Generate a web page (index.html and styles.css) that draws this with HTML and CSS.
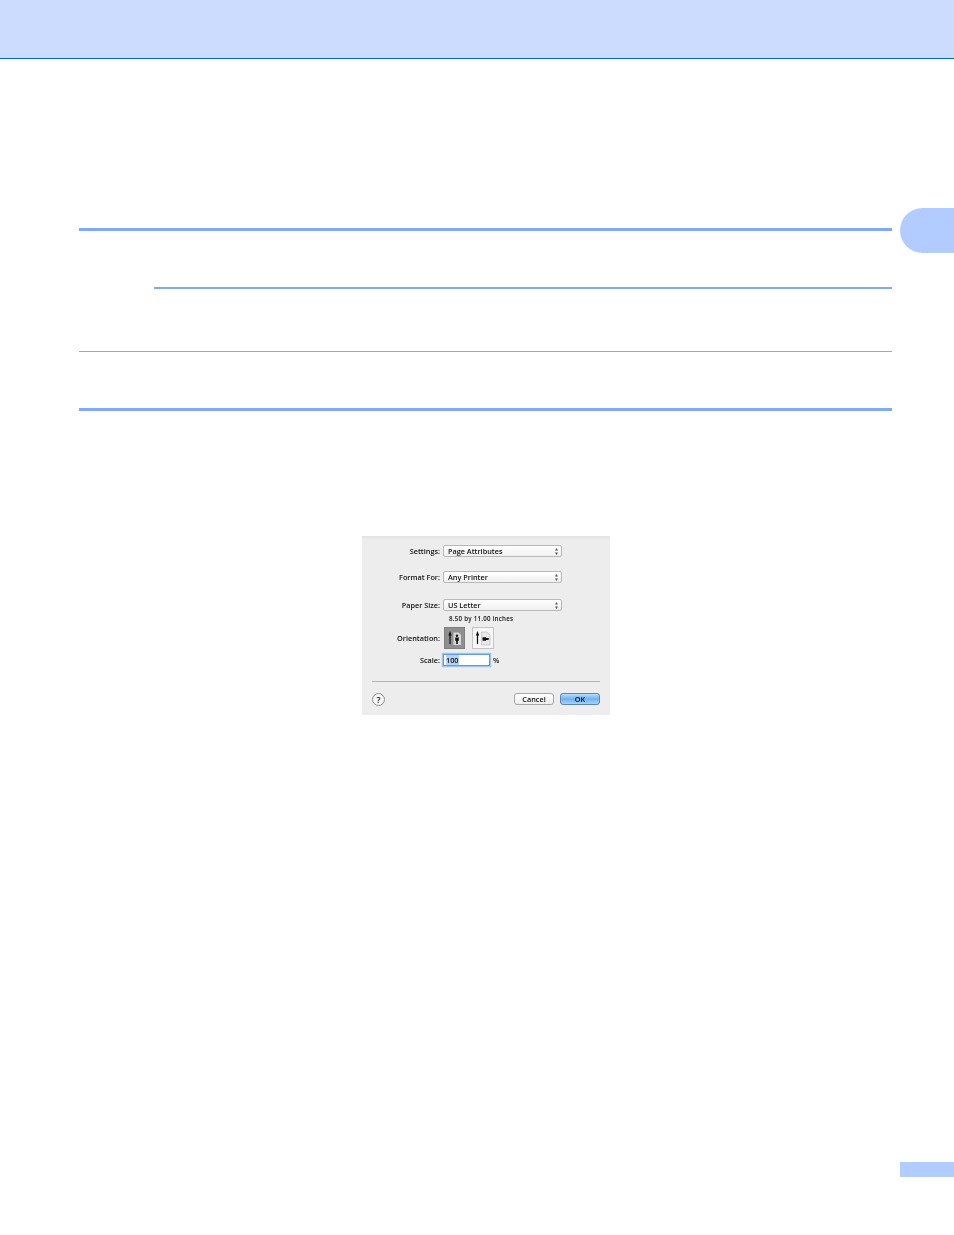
FILE: index.html
```html
<!DOCTYPE html>
<html lang="en">
<head>
    <meta charset="UTF-8">
    <title>Page Attributes</title>
    <link rel="stylesheet" href="styles.css">
</head>
<body>
    <div class="header"></div>
    <div class="chapter-tab"></div>

    <div class="content">
        <div class="rule rule-thick first"></div>
        <div class="rule rule-sub"></div>
        <div class="rule rule-thin"></div>
        <div class="rule rule-thick last"></div>

        <div class="dialog">
            <div class="row row-settings">
                <span class="label">Settings:</span>
                <div class="select"><span>Page Attributes</span><svg class="stepper" width="3" height="7" viewBox="0 0 3 7"><path d="M1.500 0 3 2.500H0zM1.500 7 0 4.500H3z" fill="#555"/></svg></div>
            </div>
            <div class="row row-format">
                <span class="label">Format For:</span>
                <div class="select"><span>Any Printer</span><svg class="stepper" width="3" height="7" viewBox="0 0 3 7"><path d="M1.500 0 3 2.500H0zM1.500 7 0 4.500H3z" fill="#555"/></svg></div>
            </div>
            <div class="row row-paper">
                <span class="label">Paper Size:</span>
                <div class="select"><span>US Letter</span><svg class="stepper" width="3" height="7" viewBox="0 0 3 7"><path d="M1.500 0 3 2.500H0zM1.500 7 0 4.500H3z" fill="#555"/></svg></div>
            </div>
            <div class="paper-note">8.50 by 11.00 inches</div>
            <div class="row row-orient">
                <span class="label">Orientation:</span>
                <div class="orient-btns">
                    <div class="orient-btn active">
                        <svg width="21" height="22" viewBox="0 0 21 22">
                            <path d="M6 7v10" stroke="#111" stroke-width="1.200"/>
                            <path d="M4.300 8.500 6 4 7.700 8.500z" fill="#111"/>
                            <path d="M9.500 5.500h5l2.500 2.500v10H9.500z" fill="#d8d8d8"/>
                            <circle cx="13" cy="8.800" r="1.200" fill="#111"/>
                            <path d="M11.200 10.500h3.600v3.300h-.8V17h-.8v-2.800h-.4V17h-.8v-3.200h-.8z" fill="#111"/>
                        </svg>
                    </div>
                    <div class="orient-btn">
                        <svg width="22" height="22" viewBox="0 0 22 22">
                            <path d="M5.500 7v10" stroke="#111" stroke-width="1.200"/>
                            <path d="M3.800 8.500 5.500 4 7.200 8.500z" fill="#111"/>
                            <path d="M9.500 5h5.500l3 3v10H9.500z" fill="#e8e8e8" stroke="#a8a8a8" stroke-width=".5"/>
                            <path d="M10.500 10.300h3.500v3.400h-3.500zM14 11h2.200l1 1-1 1H14z" fill="#111"/>
                        </svg>
                    </div>
                </div>
            </div>
            <div class="row row-scale">
                <span class="label">Scale:</span>
                <div class="scale-input"><span class="selected">100</span></div>
                <span class="percent">%</span>
            </div>
            <div class="divider"></div>
            <div class="footer-row">
                <div class="help">?</div>
                <div class="buttons">
                    <div class="btn">Cancel</div>
                    <div class="btn btn-ok">OK</div>
                </div>
            </div>
        </div>
    </div>

    <div class="page-tab"></div>
</body>
</html>
```

FILE: styles.css
```css
html, body {
    margin: 0;
    padding: 0;
    background-color: white;
}
body {
    position: relative;
    height: 1235px;
    overflow: hidden;
    font-family: "Open Sans", Arial, sans-serif;
}
.header {
    height: 58px;
    background-color: #ccdcff;
    border-bottom: 1px solid #0a5cf0;
}
.chapter-tab {
    position: absolute;
    left: 900px;
    top: 208px;
    width: 54px;
    height: 45px;
    background-color: #b3ccff;
    border-radius: 23px 0 0 23px;
}
.page-tab {
    position: absolute;
    left: 900px;
    top: 1162px;
    width: 54px;
    height: 15px;
    background-color: #b3ccff;
}
.content {
    padding: 0 62px 0 79px;
}
.rule {
    background-color: #80a8ff;
}
.rule-thick {
    height: 3px;
}
.rule-thick.first {
    margin-top: 169px;
}
.rule-thick.last {
    margin-top: 56px;
}
.rule-sub {
    height: 2px;
    margin-top: 56px;
    margin-left: 75px;
}
.rule-thin {
    height: 1px;
    margin-top: 62px;
}

/* dialog */
.dialog {
    box-sizing: border-box;
    width: 248px;
    height: 179px;
    margin: 125px 0 0 283px;
    padding-top: 9px;
    background: linear-gradient(#e2e2e2, #ededed 4px);
    color: #111;
    font-size: 7.3px;
    font-weight: 600;
    filter: blur(0.3px);
}
.row {
    display: flex;
    align-items: center;
    height: 12px;
}
.row-format {
    margin-top: 14px;
}
.row-paper {
    margin-top: 16px;
}
.row-orient {
    height: 22px;
    margin-top: 3px;
}
.row-scale {
    margin-top: 5px;
}
.label {
    width: 78px;
    margin-right: 3px;
    text-align: right;
    white-space: nowrap;
}
.select {
    box-sizing: border-box;
    display: flex;
    justify-content: space-between;
    align-items: center;
    width: 119px;
    height: 12px;
    padding: 0 3px 0 4px;
    background: linear-gradient(#fff, #f0f0f0);
    border: 1px solid #b8b8b8;
    border-radius: 2px;
}
.paper-note {
    height: 10px;
    margin: 3px 0 0 87px;
    font-size: 6.2px;
    letter-spacing: 0.25px;
    line-height: 10px;
}
.orient-btns {
    display: flex;
    gap: 7px;
    margin-left: 1px;
}
.orient-btn {
    box-sizing: border-box;
    width: 22px;
    height: 22px;
    background-color: #f6f6f6;
    border: 1px solid #c4c4c4;
}
.orient-btn svg {
    display: block;
    margin: -1px;
}
.orient-btn.active {
    width: 21px;
    background-color: #8f8f8f;
    border-color: #808080;
}
.scale-input {
    box-sizing: border-box;
    width: 47px;
    height: 12px;
    padding-left: 2px;
    background-color: white;
    border: 1px solid #5f9fe0;
    box-shadow: 0 0 1px 1px #9cc4ee;
    line-height: 10px;
}
.selected {
    display: inline-block;
    background-color: #b4d3f5;
}
.percent {
    margin-left: 3px;
}
.divider {
    width: 228px;
    height: 1px;
    margin: 15px 0 0 10px;
    background-color: #b4b4b4;
}
.footer-row {
    display: flex;
    justify-content: space-between;
    align-items: flex-start;
    margin: 11px 10px 0 10px;
}
.help {
    box-sizing: border-box;
    width: 13px;
    height: 13px;
    background-color: #f6f6f6;
    border: 1px solid #8e8e8e;
    border-radius: 50%;
    font-size: 9px;
    line-height: 11px;
    text-align: center;
}
.buttons {
    display: flex;
    gap: 6px;
}
.btn {
    box-sizing: border-box;
    width: 40px;
    height: 12px;
    background: linear-gradient(#fff, #eee);
    border: 1px solid #a8a8a8;
    border-radius: 3px;
    line-height: 10px;
    text-align: center;
}
.btn-ok {
    background: linear-gradient(#bcdcf8, #6fb2ee 50%, #a6d2f6);
    border-color: #5a85b5;
}
```
